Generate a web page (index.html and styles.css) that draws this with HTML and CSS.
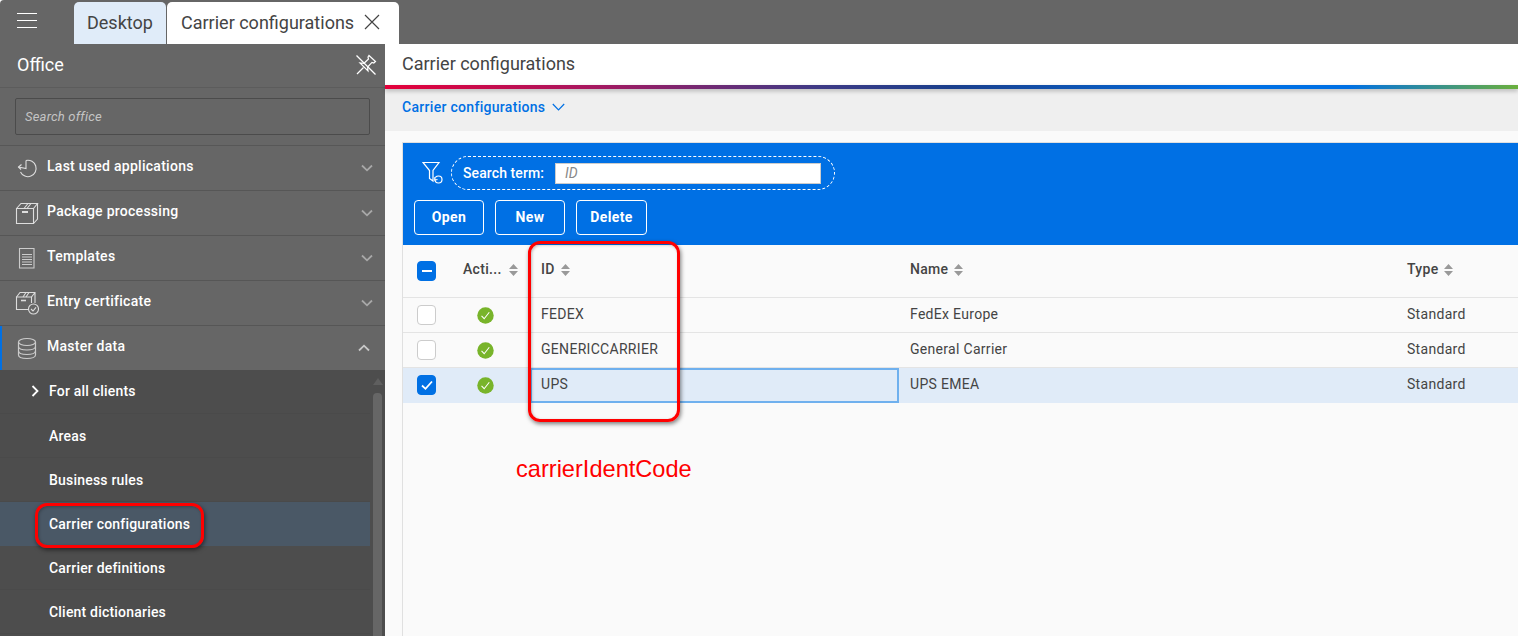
FILE: index.html
```html
<!DOCTYPE html>
<html lang="en">
<head>
<meta charset="utf-8">
<title>Carrier configurations</title>
<link rel="stylesheet" href="styles.css">
</head>
<body>
<svg class="defs" width="0" height="0" aria-hidden="true">
  <symbol id="sort" viewBox="0 0 9 12"><path d="M4.5 0 9 5H0zM4.5 12 0 7h9z"/></symbol>
  <symbol id="ok" viewBox="0 0 18 18"><circle cx="9" cy="9" r="8.7" fill="#78b42a"/><path d="M4.8 9.4 7.6 12.4 13 5.6" fill="none" stroke="#fff" stroke-width="1.1"/></symbol>
  <symbol id="down" viewBox="0 0 12 8"><path d="M1 1.5 6 6.3 11 1.5" fill="none" stroke="currentColor" stroke-width="1.8"/></symbol>
</svg>
<div class="app">
  <header class="topbar">
    <button class="burger" aria-label="Menu"><span></span><span></span><span></span></button>
    <nav class="tabs">
      <div class="tab tab-idle">Desktop</div>
      <div class="tab tab-active">Carrier configurations
        <svg class="tab-x" width="16" height="16" viewBox="0 0 16 16"><path d="M1 1 15 15M15 1 1 15" stroke="#444" stroke-width="1.2"/></svg>
      </div>
    </nav>
  </header>
  <div class="body">
    <aside class="sidebar">
      <div class="side-head">
        <span>Office</span>
        <svg class="pin" width="22" height="22" viewBox="0 0 22 22" fill="none" stroke="#fff" stroke-width="1.2"><path d="M14 1.5 20.5 7.5 18.8 9 17 8.4 12.6 13 13 17 5 9 9 9.3 13.5 5 13 3z"/><path d="M8.5 13.5 2 20"/><path d="M1.5 1.5 20.5 20.5"/></svg>
      </div>
      <div class="side-search"><div class="side-input">Search office</div></div>
      <div class="group">
        <svg class="gi" width="24" height="24" viewBox="0 0 24 24" fill="none" stroke="#ddd" stroke-width="1.1"><path d="M11 4.5A8.2 8.2 0 1 1 5.5 16"/><path d="M11 4.5V12.5L3.5 11"/><path d="M6.5 8.5 3.5 11 6 13.5"/></svg>
        <span class="gl">Last used applications</span>
        <svg class="chev" width="12" height="8"><use href="#down"/></svg>
      </div>
      <div class="group">
        <svg class="gi" width="24" height="24" viewBox="0 0 24 24" fill="none" stroke="#ddd" stroke-width="1.1"><path d="M1.5 7.5H18.5V22.5H1.5z"/><path d="M1.5 7.5 6 2.5H22.5L18.5 7.5"/><path d="M22.5 2.5V18L18.5 22.5"/><path d="M7 11H13" stroke-width="2"/><path d="M9 7.5 13 2.5M12 7.5 16 2.5"/></svg>
        <span class="gl">Package processing</span>
        <svg class="chev" width="12" height="8"><use href="#down"/></svg>
      </div>
      <div class="group">
        <svg class="gi" width="24" height="24" viewBox="0 0 24 24" fill="none" stroke="#ccc" stroke-width="1.1"><path d="M4.5 2.5H19V22H4.5z"/><path d="M7 8.5H17M7 11H17M7 13.5H17M7 16H17M7 18.5H17" stroke-width="1.2"/></svg>
        <span class="gl">Templates</span>
        <svg class="chev" width="12" height="8"><use href="#down"/></svg>
      </div>
      <div class="group">
        <svg class="gi" width="24" height="24" viewBox="0 0 24 24" fill="none" stroke="#ddd" stroke-width="1.1"><path d="M13.5 18.5H1.5V6H16.5V12"/><path d="M1.5 6 5 1.5H20V12M16.5 6 20 1.5"/><path d="M6 9.5H11" stroke-width="1.6"/><path d="M8 6 11 1.5M11 6 14 1.5"/><circle cx="18.5" cy="18" r="5"/><path d="M16 18 18 20 21 16.3"/></svg>
        <span class="gl">Entry certificate</span>
        <svg class="chev" width="12" height="8"><use href="#down"/></svg>
      </div>
      <div class="group group-open">
        <svg class="gi" width="24" height="24" viewBox="0 0 24 24" fill="none" stroke="#ccc" stroke-width="1.2"><ellipse cx="12" cy="6" rx="8.5" ry="3.5"/><path d="M3.5 6V19C3.5 21 7 22.5 12 22.5S20.500 21 20.500 19V6"/><path d="M3.500 10.500C3.500 12.500 7 14 12 14S20.500 12.500 20.500 10.500M3.500 15C3.500 17 7 18.500 12 18.500S20.500 17 20.500 15"/></svg>
        <span class="gl">Master data</span>
        <svg class="chev chev-up" width="12" height="8"><use href="#down"/></svg>
      </div>
      <div class="sub">
        <ul class="sub-list">
          <li class="sub-item sub-folder">
            <svg class="sub-arrow" width="8" height="12" viewBox="0 0 8 12"><path d="M1.500 1 6.500 6 1.500 11" fill="none" stroke="#fff" stroke-width="1.800"/></svg>
            For all clients</li>
          <li class="sub-item">Areas</li>
          <li class="sub-item">Business rules</li>
          <li class="sub-item sub-current">Carrier configurations</li>
          <li class="sub-item">Carrier definitions</li>
          <li class="sub-item">Client dictionaries</li>
        </ul>
        <div class="scroll"><i class="scroll-up"></i><i class="scroll-thumb"></i></div>
      </div>
    </aside>
    <main class="main">
      <div class="title">Carrier configurations</div>
      <div class="rainbow"></div>
      <div class="crumb">Carrier configurations
        <svg width="13" height="8" viewBox="0 0 13 8"><path d="M.8 1 6.500 6.800 12.200 1" fill="none" stroke="#0070e4" stroke-width="1.200"/></svg>
      </div>
      <section class="panel">
        <div class="toolbar">
          <div class="filter-row">
            <svg class="funnel" width="22" height="24" viewBox="0 0 22 24" fill="none" stroke="#fff" stroke-width="1.200"><path d="M1 1.500H17L11 9.500V20L7.500 17.500V9.500z"/><circle cx="16.500" cy="18.500" r="3.500" fill="#0070e4"/><path d="M13 16 12.800 19 15.500 18.500" fill="#0070e4"/></svg>
            <div class="pill">
              <label class="pill-label">Search term:</label>
              <div class="pill-input">ID</div>
            </div>
          </div>
          <div class="actions">
            <button class="btn">Open</button>
            <button class="btn">New</button>
            <button class="btn">Delete</button>
          </div>
        </div>
        <div class="grid">
          <div class="row row-head">
            <div class="c c-check"><span class="box box-on"><i class="dash"></i></span></div>
            <div class="c c-hd">Acti... <svg class="sort sort-a"><use href="#sort"/></svg></div>
            <div class="c c-hd">ID <svg class="sort"><use href="#sort"/></svg></div>
            <div class="c c-hd">Name <svg class="sort"><use href="#sort"/></svg></div>
            <div class="c c-hd">Type <svg class="sort"><use href="#sort"/></svg></div>
          </div>
          <div class="row">
            <div class="c c-check"><span class="box"></span></div>
            <div class="c c-ok"><svg width="17" height="17"><use href="#ok"/></svg></div>
            <div class="c c-text">FEDEX</div><div class="c c-text">FedEx Europe</div><div class="c c-text">Standard</div>
          </div>
          <div class="row">
            <div class="c c-check"><span class="box"></span></div>
            <div class="c c-ok"><svg width="17" height="17"><use href="#ok"/></svg></div>
            <div class="c c-text">GENERICCARRIER</div><div class="c c-text">General Carrier</div><div class="c c-text">Standard</div>
          </div>
          <div class="row row-sel">
            <div class="c c-check"><span class="box box-on"><svg width="14" height="12" viewBox="0 0 14 12"><path d="M2 6.500 5.500 9.800 12 2.500" fill="none" stroke="#fff" stroke-width="1.800"/></svg></span></div>
            <div class="c c-ok"><svg width="17" height="17"><use href="#ok"/></svg></div>
            <div class="c c-text c-focus">UPS</div><div class="c c-text">UPS EMEA</div><div class="c c-text">Standard</div>
          </div>
        </div>
      </section>
    </main>
  </div>
  <div class="mark mark-side"></div>
  <div class="mark mark-col"></div>
  <div class="mark-text">carrierIdentCode</div>
</div>
</body>
</html>
```
FILE: styles.css
```css
* { box-sizing: border-box; }
html, body { margin: 0; height: 100%; overflow: hidden; background: #fafafa; }
body { font-family: Roboto, "Liberation Sans", sans-serif; font-size: 14px; color: #444; }
.defs { position: absolute; }
button { font: inherit; }

.app { position: relative; width: 1518px; height: 636px; display: flex; flex-direction: column; overflow: hidden; }

/* top bar */
.topbar { height: 44px; flex: none; display: flex; background: #666; border-top-left-radius: 4px; }
.burger { width: 74px; height: 44px; padding: 13px 37px 0 17px; border: 0; background: none; display: flex; flex-direction: column; gap: 6px; }
.burger span { display: block; width: 20px; height: 1px; flex: none; background: #fff; }
.tabs { display: flex; gap: 1px; padding-top: 2px; }
.tab { height: 42px; padding-bottom: 2px; font-size: 18px; display: flex; align-items: center; border-radius: 5px 5px 0 0; color: #444; }
.tab-idle { width: 92px; padding-left: 13px; background: #e0ecf9; }
.tab-active { width: 232px; padding-left: 14px; background: #fff; }
.tab-x { margin-left: 10px; flex: none; }

.body { flex: 1; min-height: 0; display: flex; }

/* sidebar */
.sidebar { width: 385px; flex: none; display: flex; flex-direction: column; background: #666; color: #fff; }
.side-head { height: 44px; flex: none; display: flex; align-items: center; justify-content: space-between; padding: 0 8px 2px 17px; font-size: 18px; border-bottom: 1px solid #5c5c5c; }
.side-search { height: 58px; flex: none; padding: 10px 15px; border-bottom: 1px solid #575757; }
.side-input { height: 37px; border: 1px solid #4b4b4b; border-radius: 2px; padding-left: 9px; line-height: 35px; font-size: 13px; font-style: italic; letter-spacing: .2px; color: #c4c4c4; }
.group { height: 45px; flex: none; display: flex; align-items: center; padding: 0 12px 0 15px; border-bottom: 1px solid #565656; font-weight: 500; letter-spacing: .27px; }
.gi { flex: none; }
.gl { flex: 1; margin-left: 8px; padding-bottom: 4px; }
.chev { color: #a8a8a8; flex: none; }
.chev-up { transform: rotate(180deg); margin-right: 3px; color: #c8c8c8; }
.group-open { height: 44px; border-bottom: 0; box-shadow: inset 2px 0 0 #0070e4; }
.group-open .gl { padding-bottom: 5px; }
.sub { flex: 1; min-height: 0; display: flex; background: #4d4d4d; }
.sub-list { list-style: none; margin: 0; padding: 0; width: 370px; flex: none; }
.sub-item { height: 44px; padding-left: 49px; display: flex; align-items: center; font-weight: 500; letter-spacing: .2px; border-bottom: 1px solid #4a4a4a; }
.sub-folder { padding-left: 31px; padding-bottom: 2px; gap: 10px; }
.sub-arrow { flex: none; }
.sub-current { background: #4a5866; border-bottom: 0; }
.scroll { margin-left: 3px; width: 9px; display: flex; flex-direction: column; align-items: center; }
.scroll-up { margin-top: 8px; width: 0; height: 0; border: solid transparent; border-width: 0 5px 7px; border-bottom-color: #5f5f5f; }
.scroll-thumb { margin-top: 8px; flex: 1; width: 9px; border-radius: 4px 4px 0 0; background: #666; }

/* main */
.main { flex: 1; min-width: 0; display: flex; flex-direction: column; }
.title { height: 41px; flex: none; padding-left: 17px; background: #fff; font-size: 18px; line-height: 40px; }
.rainbow { height: 4px; flex: none; position: relative; background: linear-gradient(90deg, #e4003a 0%, #a8175f 18%, #3f3a85 38%, #1a3f8c 50%, #0070e4 75%, #0070e4 85%, #6aaf3c 100%); box-shadow: 0 2px 4px rgba(0,0,0,.25); }
.crumb { height: 42px; flex: none; padding: 0 0 6px 17px; display: flex; align-items: center; gap: 7px; background: #efefef; color: #0070e4; font-weight: 500; letter-spacing: .3px; }
.panel { flex: 1; margin: 11px 0 0 17px; border: solid #e0e0e0; border-width: 1px 0 0 1px; background: #fafafa; }

.toolbar { height: 102px; background: #0070e4; padding: 13px 0 0 11px; color: #fff; }
.filter-row { display: flex; align-items: center; gap: 7px; padding-left: 8px; }
.funnel { flex: none; }
.pill { width: 384px; height: 34px; display: flex; align-items: center; border: 1px dashed #fff; border-radius: 17px; padding-left: 11px; }
.pill-label { width: 92px; flex: none; font-weight: 500; letter-spacing: .1px; }
.pill-input { width: 266px; height: 21px; background: #fff; border: 1px solid #ccc; padding-left: 9px; line-height: 19px; font-style: italic; color: #888; }
.actions { display: flex; gap: 11px; margin-top: 10px; }
.btn { width: 70px; height: 35px; padding: 0 0 2px; border: 1px solid #fff; border-radius: 4px; background: none; color: #fff; font-weight: 700; letter-spacing: .4px; }
.btn:last-child { width: 71px; }

.row { display: grid; grid-template-columns: 49px 78px 369px 497px 1fr; height: 35px; border-bottom: 1px solid #e4e4e4; letter-spacing: .3px; }
.row-head { height: 53px; font-weight: 500; }
.row-sel { background: #e0ebf8; border-bottom: 0; height: 35px; }
.c { display: flex; align-items: center; padding-left: 11px; white-space: nowrap; }
.c-check { padding-left: 14px; }
.c-ok { padding-left: 25px; }
.c-text { padding-bottom: 2px; }
.row-sel .c-text { padding-bottom: 4px; }
.row-sel .c-check { padding-bottom: 1px; }
.c-hd { padding-bottom: 4px; gap: 6px; }
.sort { width: 9px; height: 12px; fill: #999; flex: none; margin-top: 2px; }
.sort-a { margin-left: 1px; }
.box { width: 19px; height: 20px; display: flex; align-items: center; justify-content: center; background: #fff; border: 1px solid #ccc; border-radius: 4px; }
.box-on { background: #0070e4; border-color: #0070e4; }
.dash { width: 10px; height: 2px; background: #fff; }
.c-focus { box-shadow: inset 0 0 0 2px #6fb0ee; }

/* annotations drawn on the screenshot */
.mark { position: absolute; border: 3px solid #f00; border-radius: 12px; box-shadow: 1px 2px 4px rgba(0,0,0,.5), inset 1px 1px 3px rgba(0,0,0,.25); }
.mark-side { left: 35px; top: 503px; width: 169px; height: 45px; }
.mark-col { left: 528px; top: 241px; width: 152px; height: 181px; }
.mark-text { position: absolute; left: 516px; top: 456px; font-family: "Liberation Sans", Arial, sans-serif; font-size: 23.6px; line-height: 26px; color: #f00; }
```
